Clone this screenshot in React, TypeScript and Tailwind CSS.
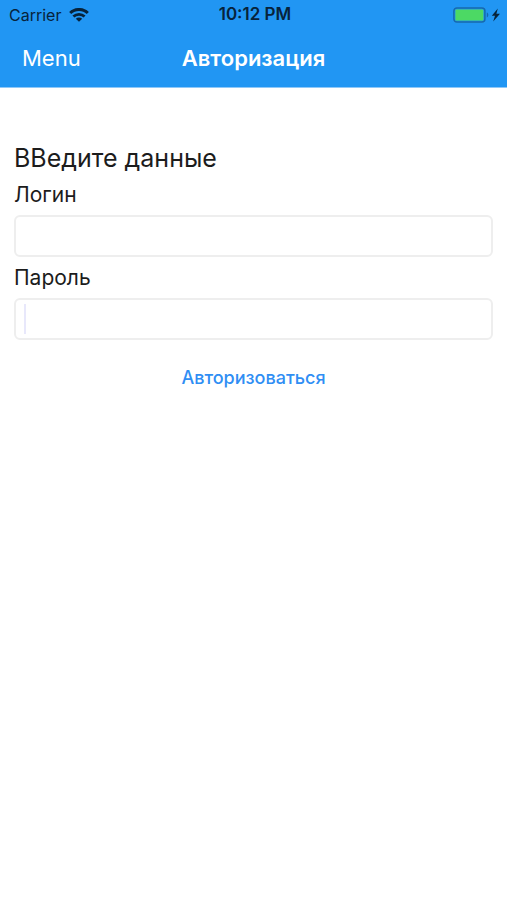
function WifiIcon() {
  return (
    <svg className="h-3.5 w-5" viewBox="0 0 20 14" fill="none" stroke="#07233b" aria-hidden="true">
      <path d="M1.2 5C6 0.3 14 0.3 18.8 5" strokeWidth="3" />
      <path d="M4.4 8.6c3.1-2.9 8.1-2.9 11.2 0" strokeWidth="2.8" />
      <path d="M10 13.8 6.8 10.8c1.8-1.7 4.6-1.7 6.4 0Z" fill="#07233b" stroke="none" />
    </svg>
  );
}

function BatteryIcon() {
  return (
    <svg className="h-4 w-12" viewBox="0 0 48 16" aria-hidden="true">
      <rect x="0.9" y="0.9" width="31" height="14.2" rx="3" fill="#2196f3" stroke="#1769ac" strokeWidth="1.5" />
      <rect x="2.4" y="2.4" width="28" height="11.2" rx="1.2" fill="#4cd964" />
      <path d="M33.8 5.6c2 .6 2 4.2 0 4.8Z" fill="#1769ac" />
      <path d="M44.8 1.6 38.8 8.8h3.2L40.2 14.4l6.8-7.6h-3.6Z" fill="#07233b" />
    </svg>
  );
}

function Header() {
  return (
    <header className="border-b border-[#8fc8f8] bg-[#2196f3]">
      <div className="grid h-[30px] grid-cols-3 items-center pr-1.5 pl-[9px] text-base text-[#07233b]">
        <div className="flex items-center gap-2">
          <span>Carrier</span>
          <WifiIcon />
        </div>
        <time className="text-center text-[17px] font-semibold">10:12 PM</time>
        <div className="flex justify-end">
          <BatteryIcon />
        </div>
      </div>
      <nav className="grid h-[57px] grid-cols-[1fr_auto_1fr] items-center px-[22px] text-[22px] text-white">
        <button type="button" className="justify-self-start">
          Menu
        </button>
        <h1 className="font-semibold">Авторизация</h1>
      </nav>
    </header>
  );
}

const labelClass = "text-[21px] leading-[41px]";
const fieldClass =
  "h-[42px] w-full rounded-md border-2 border-[#eeeeee] bg-white px-2 text-xl outline-none";

export default function App() {
  return (
    <div className="min-h-screen bg-white font-['Inter','Liberation_Sans',sans-serif] text-[#1c1c1c]">
      <Header />
      <main className="px-3.5 pt-[54px]">
        <form className="flex flex-col" onSubmit={(event) => event.preventDefault()}>
          <h2 className="text-[25px] leading-8">ВВедите данные</h2>
          <label htmlFor="login" className={labelClass}>
            Логин
          </label>
          <input id="login" type="text" autoComplete="username" className={fieldClass} />
          <label htmlFor="password" className={labelClass}>
            Пароль
          </label>
          <div className="relative">
            <input id="password" type="password" autoComplete="current-password" className={fieldClass} />
            <span className="pointer-events-none absolute inset-y-1.5 left-2.5 w-0.5 bg-[#e8e8fb]" />
          </div>
          <button type="submit" className="mt-6 self-center text-lg leading-7 font-medium text-[#2f8ef4]">
            Авторизоваться
          </button>
        </form>
      </main>
    </div>
  );
}
